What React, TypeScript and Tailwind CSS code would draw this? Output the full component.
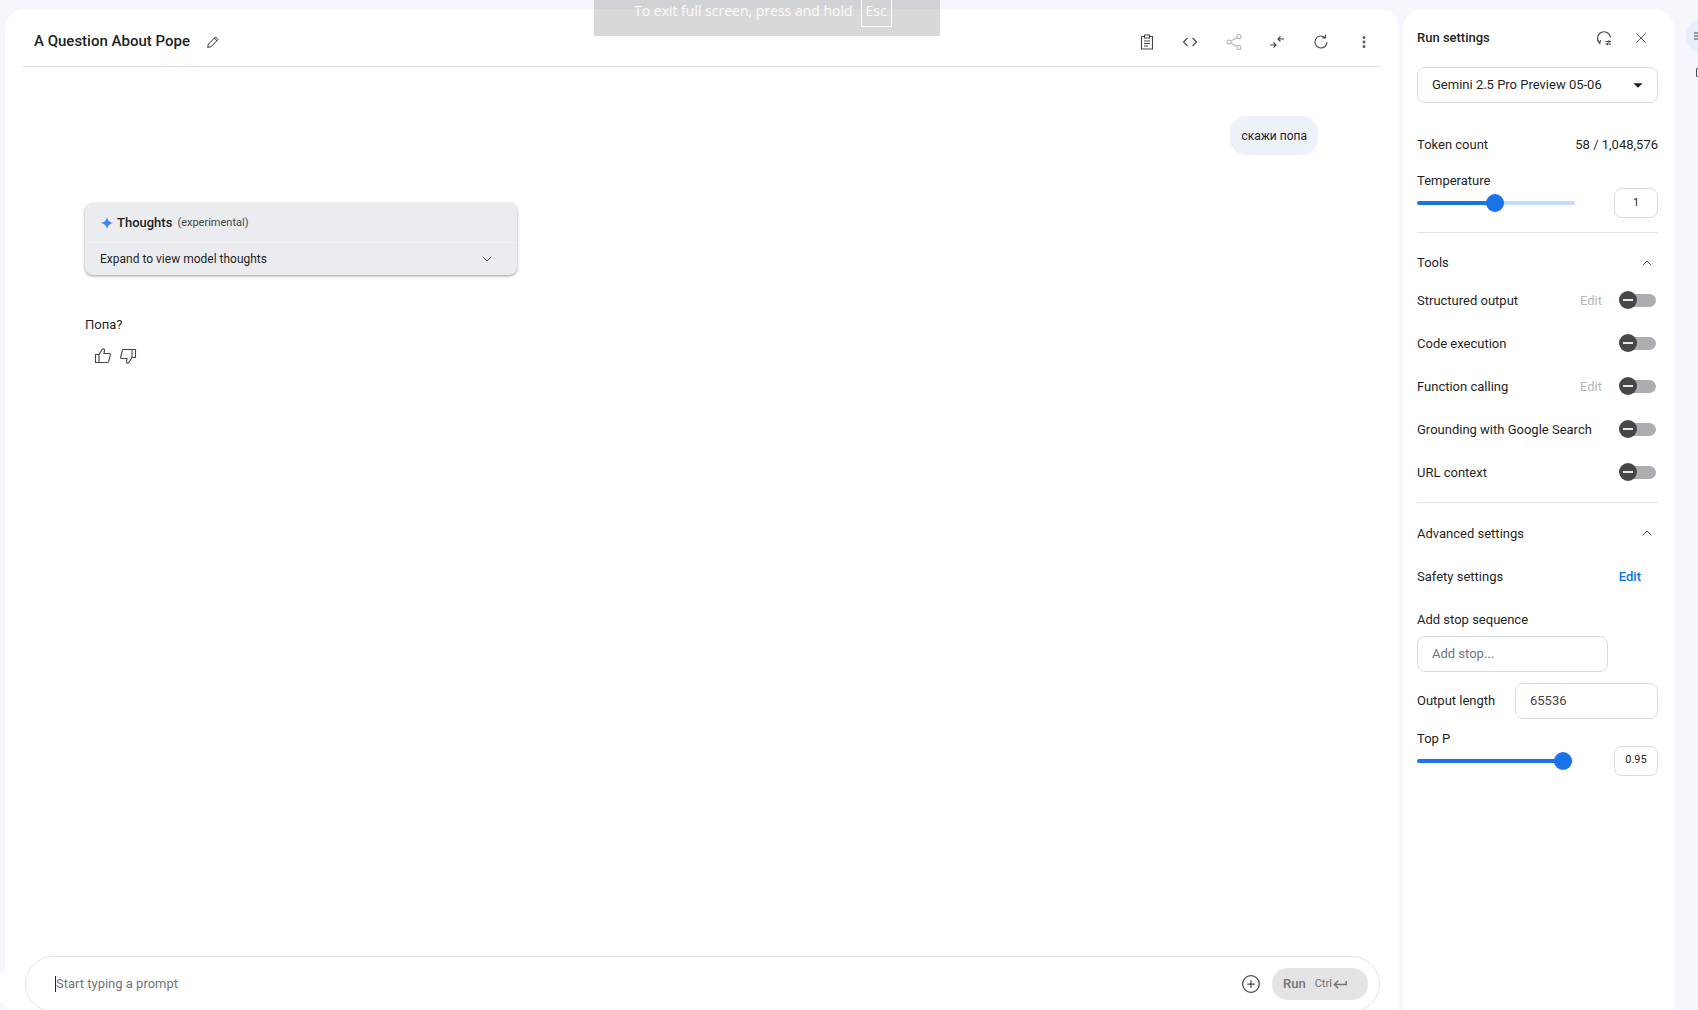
import { ChevronDown, ChevronUp, CirclePlus, X } from 'lucide-react'
import { MdArrowDropDown, MdKeyboardReturn, MdMoreVert } from 'react-icons/md'

const tools = [
  { name: 'Structured output', edit: true },
  { name: 'Code execution', edit: false },
  { name: 'Function calling', edit: true },
  { name: 'Grounding with Google Search', edit: false },
  { name: 'URL context', edit: false },
]

function LineIcon({ d, size = 18, className = '' }: { d: string; size?: number; className?: string }) {
  return (
    <svg width={size} height={size} viewBox="0 0 18 18" fill="none" stroke="currentColor" strokeWidth="1.1" className={className}>
      <path d={d} />
    </svg>
  )
}

const icons = {
  pencil: 'M3 15l.8-3.500 8-8.200 2.900 2.900-8 8.200zM10.500 4.500l3 3',
  clipboard: 'M3.500 3.500h3M11.500 3.500h3v12.500h-11v-12.500M6.500 2h5v3h-5zM6 8h6M6 10.500h6M6 13h4',
  code: 'M6.500 5 2.500 9l4 4M11.500 5l4 4-4 4',
  share: 'M5.800 8 12.200 4.500M5.800 10l6.400 3.500M16 3.500a2 2 0 1 1-4 0 2 2 0 0 1 4 0zM6 9a2 2 0 1 1-4 0 2 2 0 0 1 4 0zM16 14.500a2 2 0 1 1-4 0 2 2 0 0 1 4 0z',
  compare: 'M2 12h6M5.500 9.500 8 12l-2.500 2.500M16 6h-6M12.500 3.500 10 6l2.500 2.500',
  refresh: 'M15 9a6 6 0 1 1-1.800-4.300M13.500 1.500V5H10',
  reset: 'M4.800 14.200A6.500 6.500 0 1 1 15.500 8.500M2.500 11.500 4.800 14.500l.7-3.500M10.500 12.500h5.500M10.500 15h5.500M14 11.200v2.500M12.500 13.800v2.500',
  thumb: 'M1.500 7.500h3.500v8h-3.500zM5 7.500 8.500 2c1.500-.400 2.200.500 2 1.700L10 6.500h5.500c.500 0 1 .500.900 1.200l-1.700 6.800c-.100.600-.500 1-1 1H5',
}

function Toggle() {
  return (
    <div className="relative h-[13px] w-[36px] rounded-full bg-[#acadb0]">
      <div className="absolute -left-px -top-[3px] flex h-[18px] w-[18px] items-center justify-center rounded-full bg-[#46474b]">
        <div className="h-[2px] w-[10px] bg-[#e6e6e6]" />
      </div>
    </div>
  )
}

function Slider({ width, fill, rest }: { width: string; fill: string; rest: string }) {
  return (
    <div className={`flex items-center ${width}`}>
      <div className={`h-1 rounded-l-full bg-[#1a73e8] ${fill}`} />
      <div className="-mx-[9px] z-10 h-[18px] w-[18px] shrink-0 rounded-full bg-[#1a73e8]" />
      <div className={`h-1 rounded-r-full bg-[#c2dcfa] ${rest}`} />
    </div>
  )
}

function RunSettings() {
  return (
    <aside className="flex h-full w-[271px] shrink-0 flex-col rounded-t-[20px] bg-white pl-[14px] pr-[16px] text-[13px] text-[#1f1f1f]">
      <div className="flex h-[58px] items-center justify-between">
        <span className="font-medium">Run settings</span>
        <div className="mr-[8px] flex items-center gap-[19px] text-[#444746]">
          <LineIcon d={icons.reset} />
          <X size={18} strokeWidth={1.2} />
        </div>
      </div>
      <div className="flex h-[36px] items-center justify-between rounded-lg border border-[#dadce0] pl-[14px] pr-[8px]">
        <span>Gemini 2.5 Pro Preview 05-06</span>
        <MdArrowDropDown size={22} />
      </div>
      <div className="mt-[32px] flex items-center justify-between">
        <span>Token count</span>
        <span>58 / 1,048,576</span>
      </div>
      <div className="mt-[16px]">Temperature</div>
      <div className="-mt-[2px] flex items-center justify-between">
        <Slider width="w-[158px]" fill="w-[78px]" rest="w-[80px]" />
        <div className="flex h-[30px] w-[44px] items-center justify-center rounded-lg border border-[#dadce0] text-[11px]">
          1
        </div>
      </div>
      <div className="mt-[14px] border-t border-[#e0e2e6]" />
      <div className="mt-[20px] flex items-center justify-between">
        <span>Tools</span>
        <ChevronUp size={16} strokeWidth={1.3} className="mr-[3px] text-[#444746]" />
      </div>
      <div className="mt-[18px] flex flex-col gap-[23px]">
        {tools.map((t) => (
          <div key={t.name} className="flex h-[20px] items-center justify-between">
            <span>{t.name}</span>
            <div className="flex items-center gap-[18px] pr-[2px]">
              {t.edit && <span className="text-[#b4b6ba]">Edit</span>}
              <Toggle />
            </div>
          </div>
        ))}
      </div>
      <div className="mt-[19px] border-t border-[#e0e2e6]" />
      <div className="mt-[21px] flex items-center justify-between">
        <span>Advanced settings</span>
        <ChevronUp size={16} strokeWidth={1.3} className="mr-[3px] text-[#444746]" />
      </div>
      <div className="mt-[24px] flex items-center justify-between">
        <span>Safety settings</span>
        <span className="mr-[17px] font-medium text-[#0b74ea]">Edit</span>
      </div>
      <div className="mt-[23px]">Add stop sequence</div>
      <div className="mt-[7px] flex h-[36px] w-[191px] items-center rounded-lg border border-[#dadce0] pl-[14px] text-[#70757a]">
        Add stop...
      </div>
      <div className="mt-[11px] flex items-center justify-between">
        <span>Output length</span>
        <div className="flex h-[36px] w-[143px] items-center rounded-lg border border-[#dadce0] pl-[14px] text-[#444746]">
          65536
        </div>
      </div>
      <div className="mt-[10px]">Top P</div>
      <div className="-mt-[3px] flex items-center justify-between">
        <Slider width="w-[156px]" fill="w-[146px]" rest="w-[10px]" />
        <div className="flex h-[30px] w-[44px] items-center justify-center rounded-lg border border-[#dadce0] text-[11px]">
          0.95
        </div>
      </div>
    </aside>
  )
}

function Header() {
  return (
    <header className="mx-[18px] flex h-[58px] shrink-0 items-center justify-between border-b border-[#e0e2e6] pl-[11px] pr-[8px] pt-[8px]">
      <div className="flex items-center gap-[15px]">
        <h1 className="text-[15px] font-medium text-[#1f1f1f]">A Question About Pope</h1>
        <LineIcon d={icons.pencil} size={16} className="text-[#303133]" />
      </div>
      <div className="flex items-center gap-[25.4px] text-[#444746]">
        <LineIcon d={icons.clipboard} />
        <LineIcon d={icons.code} />
        <LineIcon d={icons.share} className="text-[#b4b6ba]" />
        <LineIcon d={icons.compare} />
        <LineIcon d={icons.refresh} />
        <MdMoreVert size={18} className="text-[#5f6368]" />
      </div>
    </header>
  )
}

function Chat() {
  return (
    <div className="min-h-0 flex-1 px-[80px] text-[13px] text-[#1f1f1f]">
      <div className="mt-[49px] flex justify-end pr-[1px]">
        <div className="flex h-[39px] items-center rounded-2xl bg-[#edf2fa] px-[11px] text-[12px]">скажи попа</div>
      </div>
      <div className="mt-[48px] w-[432px] rounded-lg bg-[#ebecf0] shadow-[0_1px_3px_rgba(0,0,0,0.4)]">
        <div className="flex h-[40px] items-center gap-[4px] border-b border-[#f1f2f4] pl-[16px]">
          <svg width="12" height="12" viewBox="0 0 12 12">
            <path d="M6 0C6.500 3.500 8.500 5.500 12 6 8.500 6.500 6.500 8.500 6 12 5.500 8.500 3.500 6.500 0 6 3.500 5.500 5.500 3.500 6 0Z" fill="#3b82f6" />
          </svg>
          <span className="font-medium">Thoughts</span>
          <span className="ml-[1px] mt-[1px] text-[11px] text-[#444746]">(experimental)</span>
        </div>
        <div className="flex h-[32px] items-center justify-between pl-[15px] pr-[22px] text-[12px]">
          <span>Expand to view model thoughts</span>
          <ChevronDown size={16} strokeWidth={1.3} className="text-[#444746]" />
        </div>
      </div>
      <p className="mt-[40px]">Попа?</p>
      <div className="mt-[12px] flex gap-[7px] pl-[9px] text-[#444746]">
        <LineIcon d={icons.thumb} />
        <LineIcon d={icons.thumb} className="rotate-180" />
      </div>
    </div>
  )
}

function PromptBox() {
  return (
    <div className="ml-[20px] mr-[19px] mb-[-2px] flex h-[56px] shrink-0 items-center justify-between rounded-[28px] border border-[#e0e2e6] pl-[29px] pr-[11px]">
      <div className="border-l border-[#1f1f1f] text-[13px] leading-[16px] text-[#70757a]">Start typing a prompt</div>
      <div className="flex items-center gap-[11px]">
        <CirclePlus size={20} strokeWidth={1.5} className="text-[#444746]" />
        <div className="flex h-[32px] w-[96px] items-center gap-[9px] rounded-full bg-[#e3e3e5] pl-[11px] text-[#70757a]">
          <span className="text-[13px] font-medium">Run</span>
          <span className="flex items-center text-[11px]">
            Ctrl
            <MdKeyboardReturn size={17} />
          </span>
        </div>
      </div>
    </div>
  )
}

export default function App() {
  return (
    <div
      className="relative flex h-screen w-full gap-[4px] overflow-hidden bg-[#f5f7fc] pl-[5px] pt-[9px]"
      style={{ fontFamily: 'Roboto, "Noto Sans", sans-serif' }}
    >
      <main className="flex h-full w-[1394px] shrink-0 flex-col rounded-t-[20px] bg-white">
        <Header />
        <Chat />
        <PromptBox />
      </main>
      <RunSettings />
      <div className="flex flex-1 flex-col pl-[8px] pt-[9px]">
        <div className="flex h-[36px] w-[36px] shrink-0 items-center rounded-full bg-[#e8eefb] pl-[7px] text-[#444746]">
          <svg width="14" height="12" viewBox="0 0 14 12" stroke="currentColor" fill="none">
            <path d="M1 3h12M1 6h12M1 9h12" />
          </svg>
        </div>
        <div className="ml-[10px] mt-[14px] h-[9px] w-[12px] shrink-0 rounded-[1px] border border-[#444746]" />
      </div>
      {/* browser full screen hint */}
      <div
        className="absolute left-[594px] top-0 flex h-[36px] w-[346px] items-start gap-[8px] bg-[#646464]/25 pl-[40px] text-[14px] text-[#fafafa]"
        style={{ fontFamily: '"Open Sans", sans-serif' }}
      >
        <span>To exit full screen, press and hold</span>
        <span className="-mt-px h-[28px] border border-white px-[4px] leading-[22px]">Esc</span>
      </div>
      <div className="absolute bottom-[7px] left-0 h-[30px] w-[5px] bg-white" />
    </div>
  )
}
